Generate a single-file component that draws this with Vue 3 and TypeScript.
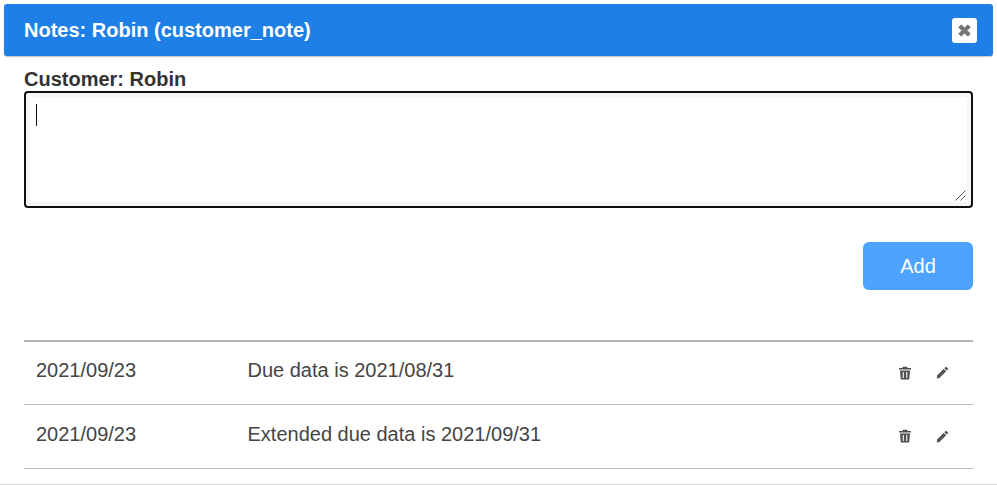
<script setup lang="ts">
import { ref } from 'vue'

interface Note {
  date: string
  text: string
}

const noteText = ref('')
const notes = ref<Note[]>([
  { date: '2021/09/23', text: 'Due data is 2021/08/31' },
  { date: '2021/09/23', text: 'Extended due data is 2021/09/31' },
])
</script>

<template>
  <div class="modal">
    <div class="header">
      <span class="title">Notes: Robin (customer_note)</span>
      <button class="close" type="button" aria-label="Close">
        <svg width="13" height="13" viewBox="0 0 12 12">
          <path d="M3 1 6 4 9 1 11 3 8 6 11 9 9 11 6 8 3 11 1 9 4 6 1 3Z" fill="#757575" stroke="#757575" stroke-linejoin="round" />
        </svg>
      </button>
    </div>
    <div class="body">
      <label class="label" for="note">Customer: Robin</label>
      <div class="editor">
        <textarea id="note" v-model="noteText"></textarea>
        <span class="caret"></span>
        <svg class="grip" width="11" height="11" viewBox="0 0 11 11">
          <path d="M0.5 10.5 10.5 0.5M5.5 10.5 10.5 5.5" stroke="#555" stroke-width="1" fill="none" />
        </svg>
      </div>
      <div class="actions">
        <button class="add" type="button">Add</button>
      </div>
      <div class="list">
        <div class="row" v-for="(note, index) in notes" :key="index">
          <div class="date">{{ note.date }}</div>
          <div class="text">{{ note.text }}</div>
          <div class="icons">
            <svg width="14" height="14" viewBox="0 0 14 14" fill="#4f4f4f">
              <path d="M5 .8h4l.8 1.2H13v1.400H1V2h3.200zM2 4.400h10l-.7 8.200c0 .6-.5 1-1 1H3.700c-.5 0-1-.4-1-1zM4.700 6v6h1.100V6zm3.500 0v6h1.100V6z" fill-rule="evenodd" />
            </svg>
            <svg width="15" height="15" viewBox="0 0 24 24" fill="#555">
              <path d="M3 17.25V21h3.75L17.81 9.94l-3.75-3.75L3 17.25zM20.71 7.04a1 1 0 0 0 0-1.41l-2.34-2.34a1 1 0 0 0-1.41 0l-1.83 1.83 3.75 3.75 1.83-1.83z" />
            </svg>
          </div>
        </div>
      </div>
    </div>
  </div>
</template>

<style scoped>
.modal {
  height: 485px;
  box-sizing: border-box;
  padding: 4px 4px 0;
  border-bottom: 1px solid #d5d5d5;
  font-family: "Liberation Sans", Arial, sans-serif;
}

.header {
  display: flex;
  align-items: center;
  justify-content: space-between;
  height: 52px;
  padding: 0 16px 0 20px;
  border-radius: 3px;
  background: #1e7fe6;
  box-shadow: 0 1px 1px #c4c4c4;
}

.title {
  color: #fff;
  font-size: 20px;
  font-weight: 700;
}

.close {
  display: flex;
  align-items: center;
  justify-content: center;
  width: 25px;
  height: 25px;
  padding: 0;
  border: none;
  border-radius: 3px;
  background: #fff;
}

.body {
  padding: 0 20px;
}

.label {
  display: block;
  height: 35px;
  padding-top: 13px;
  box-sizing: border-box;
  color: #333;
  font-size: 20px;
  font-weight: 700;
  line-height: 20px;
}

.editor {
  position: relative;
  height: 117px;
}

.editor textarea {
  display: block;
  box-sizing: border-box;
  width: 100%;
  height: 117px;
  padding: 10px;
  border: 2px solid #101010;
  border-radius: 4px;
  outline: none;
  resize: none;
  background: #fff;
  box-shadow: inset 0 0 0 4px #f6f6f6;
  font-family: inherit;
  font-size: 16px;
}

.caret {
  position: absolute;
  top: 13px;
  left: 12px;
  width: 1px;
  height: 22px;
  background: #111;
}

.grip {
  position: absolute;
  right: 7px;
  bottom: 7px;
}

.actions {
  display: flex;
  justify-content: flex-end;
  padding-top: 34px;
}

.add {
  width: 110px;
  height: 48px;
  border: none;
  border-radius: 6px;
  background: #4da3ff;
  color: #fff;
  font-family: inherit;
  font-size: 20px;
}

.list {
  margin-top: 50px;
  border-top: 2px solid #b3b3b3;
}

.row {
  display: flex;
  align-items: center;
  box-sizing: border-box;
  height: 64px;
  padding-bottom: 5px;
  border-bottom: 1px solid #bdbdbd;
  color: #444;
  font-size: 20px;
}

.row:first-child {
  height: 63px;
}

.date {
  width: 223.5px;
  padding-left: 12px;
  box-sizing: border-box;
}

.text {
  flex: 1;
}

.icons {
  display: flex;
  align-items: center;
  gap: 23px;
  margin-right: 23px;
  padding-top: 4px;
}
</style>
